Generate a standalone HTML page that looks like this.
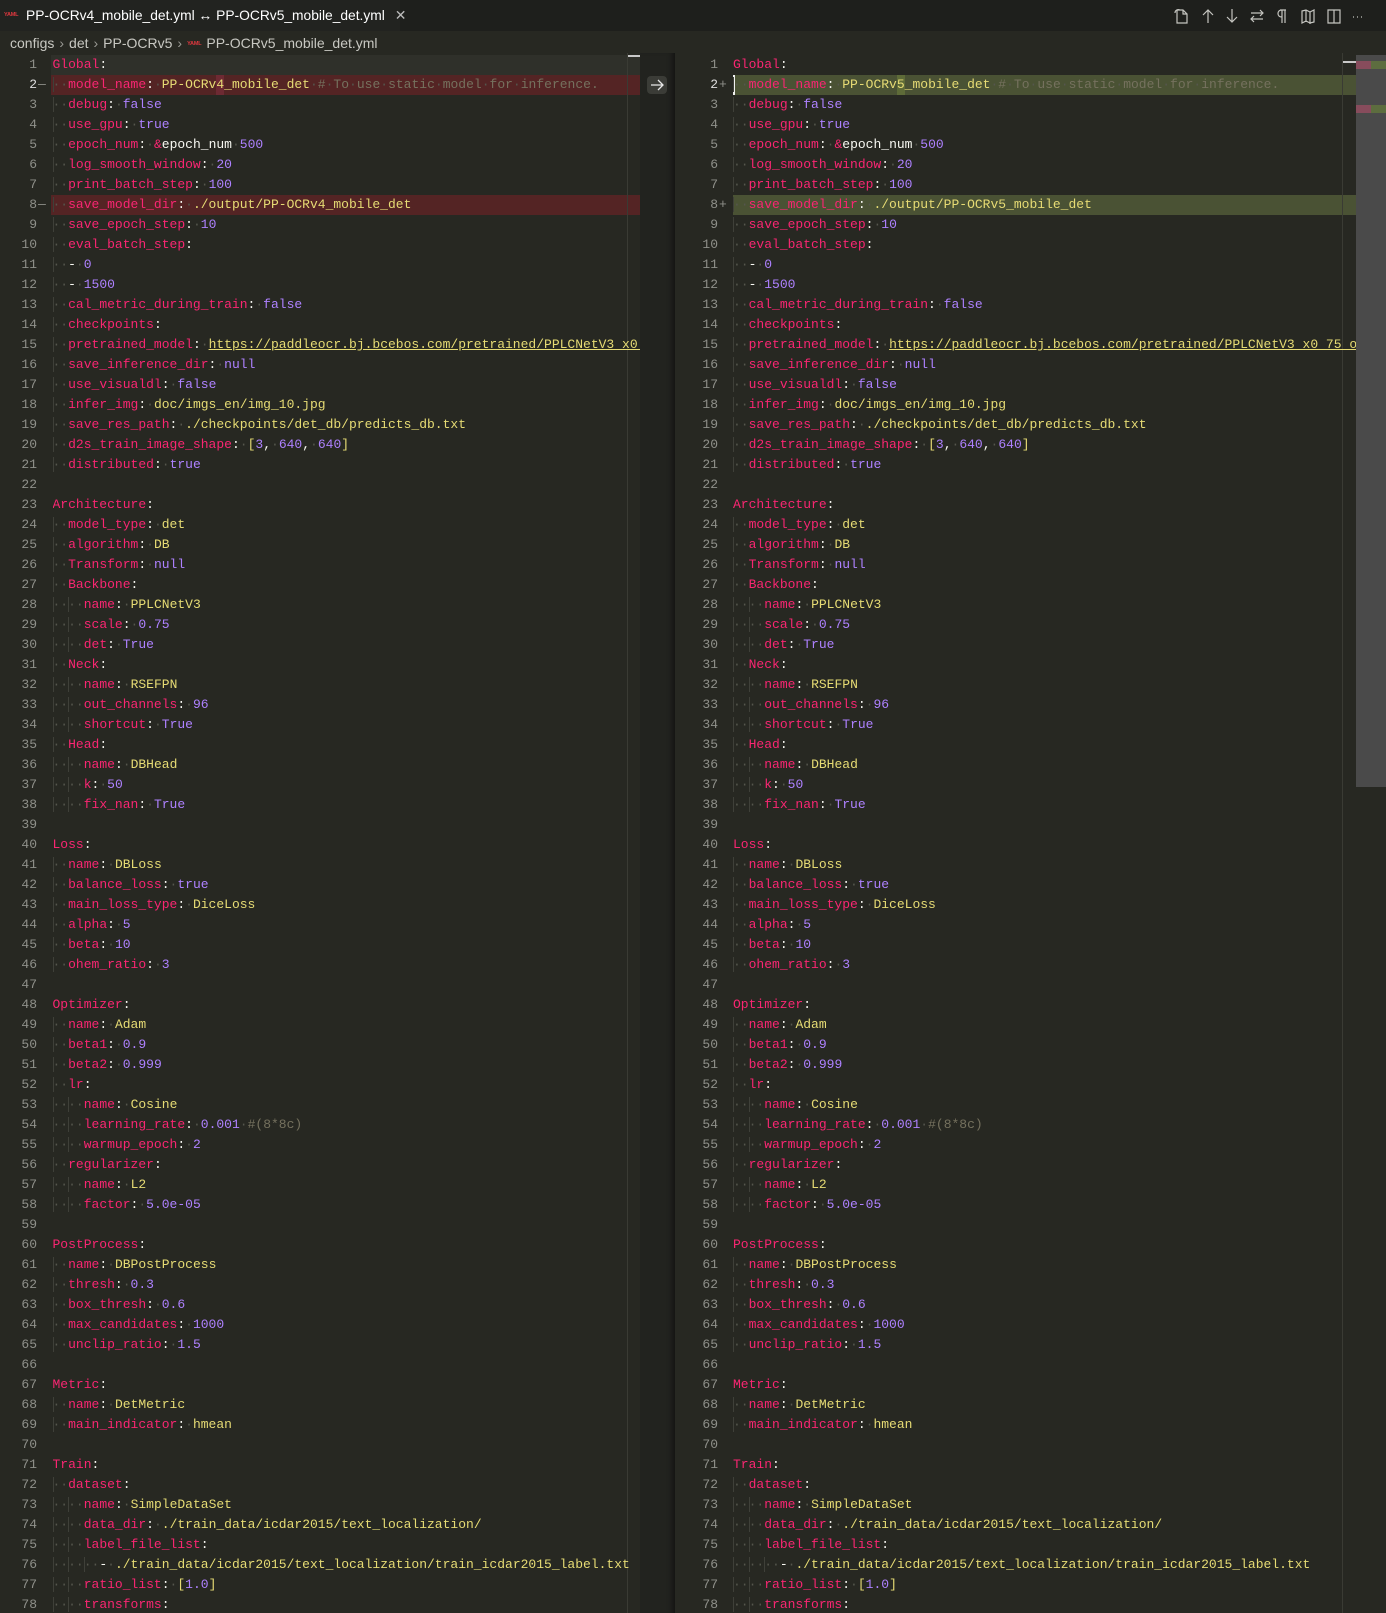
<!DOCTYPE html>
<html><head><meta charset="utf-8">
<style>
*{margin:0;padding:0;box-sizing:border-box}
html,body{width:1386px;height:1613px;overflow:hidden;background:#272822}
body{position:relative;font-family:"Liberation Mono",monospace;font-size:13px;color:#f8f8f2}
#tabs{position:absolute;left:0;top:0;width:1386px;height:31px;background:#1e1f1c}
#tab{position:absolute;left:0;top:0;width:400px;height:31px;background:#222320}
.tabt{position:absolute;left:26px;top:7px;font-family:"Liberation Sans",sans-serif;font-size:13.8px;color:#fff;white-space:nowrap}
.yml{position:absolute;font-family:"Liberation Sans",sans-serif;font-size:5.5px;font-weight:bold;color:#e0383f;letter-spacing:-.2px}
#crumb{position:absolute;left:10px;top:35px;font-family:"Liberation Sans",sans-serif;font-size:14px;color:#c8c8c2;white-space:nowrap}
#crumb .sep{color:#9a9a94;margin:0 5px}
#gap{position:absolute;left:640px;top:53px;width:35px;height:1560px;background:#22231f;box-shadow:inset -6px 0 6px -4px #111}
.pane{position:absolute;top:55px;line-height:20px;white-space:pre;overflow:hidden}
.num{color:#8f908a;text-align:right}
.hl{position:absolute;height:20px}
k{color:#f92672}y{color:#e6db74}v{color:#ae81ff}c{color:#75715e}
i{font-style:normal;color:#55564d}
b{font-weight:normal;color:#55564d;box-shadow:inset 1px 0 0 #3f4039}
u{text-decoration:underline;text-decoration-color:#e6db74;color:#e6db74}
</style></head><body>
<div id="tabs"><div id="tab"></div>
<div class="yml" style="left:4px;top:12px">YAML</div>
<div class="tabt">PP-OCRv4_mobile_det.yml ↔ PP-OCRv5_mobile_det.yml <span style="color:#bbb;margin-left:6px;font-size:14px">✕</span></div>
<svg style="position:absolute;left:1172px;top:6px" width="200" height="20" fill="none" stroke="#c5c5c0" stroke-width="1.2">
<path d="M5 4h6l4 4v9H5zM11 4v4h4M3 7c0-3 3-4 5-3"/>
<path d="M36 4v13M31 9l5-5 5 5"/>
<path d="M60 3v13M55 11l5 5 5-5"/>
<path d="M79 7h12M88 4l3 3-3 3M91 13H79M82 10l-3 3 3 3"/>
<path d="M110 4v13M113 4v13M108 4h6M110 4c-3 0-4 2-4 3.5s1 3.5 4 3.5"/>
<path d="M130 5l4-1 4 2 4-2v12l-4 1-4-2-4 2zM134 4v12M138 6v12"/>
<path d="M156 4h12v13h-12zM162 4v13"/>
<path d="M181 11h1M185 11h1M189 11h1"/>
</svg></div>
<div id="crumb">configs<span class="sep">›</span>det<span class="sep">›</span>PP-OCRv5<span class="sep">›</span><span class="yml" style="position:relative;top:-3px;margin-right:5px">YAML</span>PP-OCRv5_mobile_det.yml</div>

<!-- highlights -->
<div class="hl" style="left:51px;top:55px;width:589px;background:#2f302a"></div>
<div class="hl" style="left:51px;top:75px;width:589px;background:#542424"></div>
<div class="hl" style="left:51px;top:195px;width:589px;background:#542424"></div>
<div class="hl" style="left:216px;top:75px;width:8px;background:#6e2a33"></div>
<div class="hl" style="left:733px;top:75px;width:623px;background:#4a5234"></div>
<div class="hl" style="left:733px;top:195px;width:623px;background:#4a5234"></div>
<div class="hl" style="left:897px;top:75px;width:8px;background:#5e6b38"></div>
<div style="position:absolute;left:733px;top:75px;width:2px;height:20px;background:#f0f0f0"></div>
<div style="position:absolute;left:627px;top:53px;width:1px;height:1560px;background:#3a3b34"></div>
<div style="position:absolute;left:628px;top:55px;width:12px;height:2px;background:#c8c8c8"></div>
<div style="position:absolute;left:1342px;top:53px;width:1px;height:1560px;background:#3a3b34"></div>
<div style="position:absolute;left:1343px;top:61px;width:13px;height:2px;background:#c8c8c8"></div>
<div style="position:absolute;left:1356px;top:55px;width:30px;height:732px;background:#4a4a4a"></div>
<div style="position:absolute;left:1356px;top:61px;width:15px;height:8px;background:#874c5c"></div>
<div style="position:absolute;left:1371px;top:61px;width:15px;height:8px;background:#5d6d3f"></div>
<div style="position:absolute;left:1356px;top:105px;width:15px;height:8px;background:#874c5c"></div>
<div style="position:absolute;left:1371px;top:105px;width:15px;height:8px;background:#5d6d3f"></div>
<div id="gap"></div>
<div style="position:absolute;left:647px;top:76px;width:20px;height:18px;background:#3b3c37;border-radius:4px"></div>
<svg style="position:absolute;left:647px;top:76px" width="20" height="18" fill="none" stroke="#e8e8e8" stroke-width="1.3"><path d="M4 9h12M11 4l5 5-5 5"/></svg>

<!-- left gutter -->
<div class="pane num" style="left:0;width:37px">1
<span style="color:#ddd">2</span>
3
4
5
6
7
8
9
10
11
12
13
14
15
16
17
18
19
20
21
22
23
24
25
26
27
28
29
30
31
32
33
34
35
36
37
38
39
40
41
42
43
44
45
46
47
48
49
50
51
52
53
54
55
56
57
58
59
60
61
62
63
64
65
66
67
68
69
70
71
72
73
74
75
76
77
78</div>
<div class="pane num" style="left:38px;width:12px;color:#8f908a;text-align:left">
—





—</div>

<!-- right gutter -->
<div class="pane num" style="left:680px;width:38px">1
<span style="color:#ddd">2</span>
3
4
5
6
7
8
9
10
11
12
13
14
15
16
17
18
19
20
21
22
23
24
25
26
27
28
29
30
31
32
33
34
35
36
37
38
39
40
41
42
43
44
45
46
47
48
49
50
51
52
53
54
55
56
57
58
59
60
61
62
63
64
65
66
67
68
69
70
71
72
73
74
75
76
77
78</div>
<div class="pane num" style="left:719px;width:12px;text-align:left">
+





+</div>

<!-- left code -->
<div class="pane" style="left:52.5px;width:587px"><k>Global</k>:
<b>··</b><k>model_name</k>:<i>·</i><y>PP-OCRv4_mobile_det</y><i>·</i><c>#<i>·</i>To<i>·</i>use<i>·</i>static<i>·</i>model<i>·</i>for<i>·</i>inference.</c>
<b>··</b><k>debug</k>:<i>·</i><v>false</v>
<b>··</b><k>use_gpu</k>:<i>·</i><v>true</v>
<b>··</b><k>epoch_num</k>:<i>·</i><k>&amp;</k>epoch_num<i>·</i><v>500</v>
<b>··</b><k>log_smooth_window</k>:<i>·</i><v>20</v>
<b>··</b><k>print_batch_step</k>:<i>·</i><v>100</v>
<b>··</b><k>save_model_dir</k>:<i>·</i><y>./output/PP-OCRv4_mobile_det</y>
<b>··</b><k>save_epoch_step</k>:<i>·</i><v>10</v>
<b>··</b><k>eval_batch_step</k>:
<b>··</b>-<i>·</i><v>0</v>
<b>··</b>-<i>·</i><v>1500</v>
<b>··</b><k>cal_metric_during_train</k>:<i>·</i><v>false</v>
<b>··</b><k>checkpoints</k>:
<b>··</b><k>pretrained_model</k>:<i>·</i><u>https://paddleocr.bj.bcebos.com/pretrained/PPLCNetV3_x0_75_ocr_det.pdparams</u>
<b>··</b><k>save_inference_dir</k>:<i>·</i><v>null</v>
<b>··</b><k>use_visualdl</k>:<i>·</i><v>false</v>
<b>··</b><k>infer_img</k>:<i>·</i><y>doc/imgs_en/img_10.jpg</y>
<b>··</b><k>save_res_path</k>:<i>·</i><y>./checkpoints/det_db/predicts_db.txt</y>
<b>··</b><k>d2s_train_image_shape</k>:<i>·</i><y>[</y><v>3</v>,<i>·</i><v>640</v>,<i>·</i><v>640</v><y>]</y>
<b>··</b><k>distributed</k>:<i>·</i><v>true</v>

<k>Architecture</k>:
<b>··</b><k>model_type</k>:<i>·</i><y>det</y>
<b>··</b><k>algorithm</k>:<i>·</i><y>DB</y>
<b>··</b><k>Transform</k>:<i>·</i><v>null</v>
<b>··</b><k>Backbone</k>:
<b>··</b><b>··</b><k>name</k>:<i>·</i><y>PPLCNetV3</y>
<b>··</b><b>··</b><k>scale</k>:<i>·</i><v>0.75</v>
<b>··</b><b>··</b><k>det</k>:<i>·</i><v>True</v>
<b>··</b><k>Neck</k>:
<b>··</b><b>··</b><k>name</k>:<i>·</i><y>RSEFPN</y>
<b>··</b><b>··</b><k>out_channels</k>:<i>·</i><v>96</v>
<b>··</b><b>··</b><k>shortcut</k>:<i>·</i><v>True</v>
<b>··</b><k>Head</k>:
<b>··</b><b>··</b><k>name</k>:<i>·</i><y>DBHead</y>
<b>··</b><b>··</b><k>k</k>:<i>·</i><v>50</v>
<b>··</b><b>··</b><k>fix_nan</k>:<i>·</i><v>True</v>

<k>Loss</k>:
<b>··</b><k>name</k>:<i>·</i><y>DBLoss</y>
<b>··</b><k>balance_loss</k>:<i>·</i><v>true</v>
<b>··</b><k>main_loss_type</k>:<i>·</i><y>DiceLoss</y>
<b>··</b><k>alpha</k>:<i>·</i><v>5</v>
<b>··</b><k>beta</k>:<i>·</i><v>10</v>
<b>··</b><k>ohem_ratio</k>:<i>·</i><v>3</v>

<k>Optimizer</k>:
<b>··</b><k>name</k>:<i>·</i><y>Adam</y>
<b>··</b><k>beta1</k>:<i>·</i><v>0.9</v>
<b>··</b><k>beta2</k>:<i>·</i><v>0.999</v>
<b>··</b><k>lr</k>:
<b>··</b><b>··</b><k>name</k>:<i>·</i><y>Cosine</y>
<b>··</b><b>··</b><k>learning_rate</k>:<i>·</i><v>0.001</v><i>·</i><c>#(8*8c)</c>
<b>··</b><b>··</b><k>warmup_epoch</k>:<i>·</i><v>2</v>
<b>··</b><k>regularizer</k>:
<b>··</b><b>··</b><k>name</k>:<i>·</i><y>L2</y>
<b>··</b><b>··</b><k>factor</k>:<i>·</i><v>5.0e-05</v>

<k>PostProcess</k>:
<b>··</b><k>name</k>:<i>·</i><y>DBPostProcess</y>
<b>··</b><k>thresh</k>:<i>·</i><v>0.3</v>
<b>··</b><k>box_thresh</k>:<i>·</i><v>0.6</v>
<b>··</b><k>max_candidates</k>:<i>·</i><v>1000</v>
<b>··</b><k>unclip_ratio</k>:<i>·</i><v>1.5</v>

<k>Metric</k>:
<b>··</b><k>name</k>:<i>·</i><y>DetMetric</y>
<b>··</b><k>main_indicator</k>:<i>·</i><y>hmean</y>

<k>Train</k>:
<b>··</b><k>dataset</k>:
<b>··</b><b>··</b><k>name</k>:<i>·</i><y>SimpleDataSet</y>
<b>··</b><b>··</b><k>data_dir</k>:<i>·</i><y>./train_data/icdar2015/text_localization/</y>
<b>··</b><b>··</b><k>label_file_list</k>:
<b>··</b><b>··</b><b>··</b>-<i>·</i><y>./train_data/icdar2015/text_localization/train_icdar2015_label.txt</y>
<b>··</b><b>··</b><k>ratio_list</k>:<i>·</i><y>[</y><v>1.0</v><y>]</y>
<b>··</b><b>··</b><k>transforms</k>:</div>

<!-- right code -->
<div class="pane" style="left:733px;width:623px"><k>Global</k>:
<b>··</b><k>model_name</k>:<i>·</i><y>PP-OCRv5_mobile_det</y><i>·</i><c>#<i>·</i>To<i>·</i>use<i>·</i>static<i>·</i>model<i>·</i>for<i>·</i>inference.</c>
<b>··</b><k>debug</k>:<i>·</i><v>false</v>
<b>··</b><k>use_gpu</k>:<i>·</i><v>true</v>
<b>··</b><k>epoch_num</k>:<i>·</i><k>&amp;</k>epoch_num<i>·</i><v>500</v>
<b>··</b><k>log_smooth_window</k>:<i>·</i><v>20</v>
<b>··</b><k>print_batch_step</k>:<i>·</i><v>100</v>
<b>··</b><k>save_model_dir</k>:<i>·</i><y>./output/PP-OCRv5_mobile_det</y>
<b>··</b><k>save_epoch_step</k>:<i>·</i><v>10</v>
<b>··</b><k>eval_batch_step</k>:
<b>··</b>-<i>·</i><v>0</v>
<b>··</b>-<i>·</i><v>1500</v>
<b>··</b><k>cal_metric_during_train</k>:<i>·</i><v>false</v>
<b>··</b><k>checkpoints</k>:
<b>··</b><k>pretrained_model</k>:<i>·</i><u>https://paddleocr.bj.bcebos.com/pretrained/PPLCNetV3_x0_75_ocr_det.pdparams</u>
<b>··</b><k>save_inference_dir</k>:<i>·</i><v>null</v>
<b>··</b><k>use_visualdl</k>:<i>·</i><v>false</v>
<b>··</b><k>infer_img</k>:<i>·</i><y>doc/imgs_en/img_10.jpg</y>
<b>··</b><k>save_res_path</k>:<i>·</i><y>./checkpoints/det_db/predicts_db.txt</y>
<b>··</b><k>d2s_train_image_shape</k>:<i>·</i><y>[</y><v>3</v>,<i>·</i><v>640</v>,<i>·</i><v>640</v><y>]</y>
<b>··</b><k>distributed</k>:<i>·</i><v>true</v>

<k>Architecture</k>:
<b>··</b><k>model_type</k>:<i>·</i><y>det</y>
<b>··</b><k>algorithm</k>:<i>·</i><y>DB</y>
<b>··</b><k>Transform</k>:<i>·</i><v>null</v>
<b>··</b><k>Backbone</k>:
<b>··</b><b>··</b><k>name</k>:<i>·</i><y>PPLCNetV3</y>
<b>··</b><b>··</b><k>scale</k>:<i>·</i><v>0.75</v>
<b>··</b><b>··</b><k>det</k>:<i>·</i><v>True</v>
<b>··</b><k>Neck</k>:
<b>··</b><b>··</b><k>name</k>:<i>·</i><y>RSEFPN</y>
<b>··</b><b>··</b><k>out_channels</k>:<i>·</i><v>96</v>
<b>··</b><b>··</b><k>shortcut</k>:<i>·</i><v>True</v>
<b>··</b><k>Head</k>:
<b>··</b><b>··</b><k>name</k>:<i>·</i><y>DBHead</y>
<b>··</b><b>··</b><k>k</k>:<i>·</i><v>50</v>
<b>··</b><b>··</b><k>fix_nan</k>:<i>·</i><v>True</v>

<k>Loss</k>:
<b>··</b><k>name</k>:<i>·</i><y>DBLoss</y>
<b>··</b><k>balance_loss</k>:<i>·</i><v>true</v>
<b>··</b><k>main_loss_type</k>:<i>·</i><y>DiceLoss</y>
<b>··</b><k>alpha</k>:<i>·</i><v>5</v>
<b>··</b><k>beta</k>:<i>·</i><v>10</v>
<b>··</b><k>ohem_ratio</k>:<i>·</i><v>3</v>

<k>Optimizer</k>:
<b>··</b><k>name</k>:<i>·</i><y>Adam</y>
<b>··</b><k>beta1</k>:<i>·</i><v>0.9</v>
<b>··</b><k>beta2</k>:<i>·</i><v>0.999</v>
<b>··</b><k>lr</k>:
<b>··</b><b>··</b><k>name</k>:<i>·</i><y>Cosine</y>
<b>··</b><b>··</b><k>learning_rate</k>:<i>·</i><v>0.001</v><i>·</i><c>#(8*8c)</c>
<b>··</b><b>··</b><k>warmup_epoch</k>:<i>·</i><v>2</v>
<b>··</b><k>regularizer</k>:
<b>··</b><b>··</b><k>name</k>:<i>·</i><y>L2</y>
<b>··</b><b>··</b><k>factor</k>:<i>·</i><v>5.0e-05</v>

<k>PostProcess</k>:
<b>··</b><k>name</k>:<i>·</i><y>DBPostProcess</y>
<b>··</b><k>thresh</k>:<i>·</i><v>0.3</v>
<b>··</b><k>box_thresh</k>:<i>·</i><v>0.6</v>
<b>··</b><k>max_candidates</k>:<i>·</i><v>1000</v>
<b>··</b><k>unclip_ratio</k>:<i>·</i><v>1.5</v>

<k>Metric</k>:
<b>··</b><k>name</k>:<i>·</i><y>DetMetric</y>
<b>··</b><k>main_indicator</k>:<i>·</i><y>hmean</y>

<k>Train</k>:
<b>··</b><k>dataset</k>:
<b>··</b><b>··</b><k>name</k>:<i>·</i><y>SimpleDataSet</y>
<b>··</b><b>··</b><k>data_dir</k>:<i>·</i><y>./train_data/icdar2015/text_localization/</y>
<b>··</b><b>··</b><k>label_file_list</k>:
<b>··</b><b>··</b><b>··</b>-<i>·</i><y>./train_data/icdar2015/text_localization/train_icdar2015_label.txt</y>
<b>··</b><b>··</b><k>ratio_list</k>:<i>·</i><y>[</y><v>1.0</v><y>]</y>
<b>··</b><b>··</b><k>transforms</k>:</div>
</body></html>
